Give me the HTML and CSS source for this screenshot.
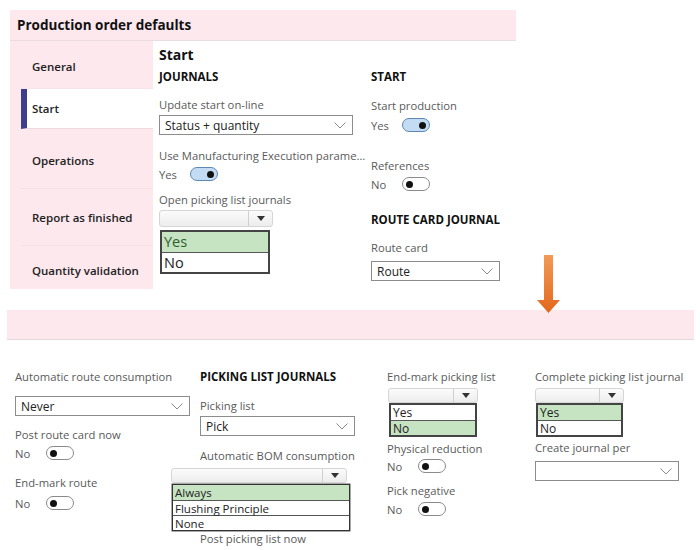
FILE: index.html
```html
<!DOCTYPE html>
<html>
<head>
<meta charset="utf-8">
<link rel="stylesheet" href="styles.css">
</head>
<body>
<div class="top">
  <div class="title-bar">Production order defaults</div>
  <div class="top-main">
    <nav class="nav">
      <div class="tab t-general">General</div>
      <div class="tab t-start">Start</div>
      <div class="tab t-ops">Operations</div>
      <div class="tab t-report">Report as finished</div>
      <div class="tab t-qty">Quantity validation</div>
    </nav>
    <section class="content">
      <h2 class="page-h">Start</h2>
      <div class="cols">
        <div class="col">
          <div class="group">JOURNALS</div>
          <div class="label mt12">Update start on-line</div>
          <div class="select mt2"><span>Status + quantity</span><svg class="chev" viewBox="0 0 12 7"><polyline points="0.5,0.5 6,6 11.5,0.5"/></svg></div>
          <div class="label mt13">Use Manufacturing Execution parame…</div>
          <div class="toggle-row mt2"><span class="tv">Yes</span><span class="switch on"><span class="knob"></span></span></div>
          <div class="label mt10">Open picking list journals</div>
          <div class="combo c-open mt2"><span class="combo-btn"><span class="tri"></span></span></div>
          <div class="list l-open">
            <div class="opt sel">Yes</div>
            <div class="opt">No</div>
          </div>
        </div>
        <div class="col">
          <div class="group">START</div>
          <div class="label mt13">Start production</div>
          <div class="toggle-row mt3"><span class="tv">Yes</span><span class="switch on"><span class="knob"></span></span></div>
          <div class="label mt25">References</div>
          <div class="toggle-row mt2"><span class="tv">No</span><span class="switch"><span class="knob"></span></span></div>
          <div class="group mt20">ROUTE CARD JOURNAL</div>
          <div class="label mt12">Route card</div>
          <div class="select s-route mt5"><span>Route</span><svg class="chev" viewBox="0 0 12 7"><polyline points="0.5,0.5 6,6 11.5,0.5"/></svg></div>
        </div>
      </div>
    </section>
  </div>
</div>

<div class="arrow">
  <svg viewBox="0 0 24 58" width="24" height="58">
    <defs>
      <linearGradient id="og" x1="0" y1="0" x2="0" y2="1">
        <stop offset="0" stop-color="#f29a55"/>
        <stop offset="1" stop-color="#e2681c"/>
      </linearGradient>
    </defs>
    <polygon points="8,0 17,0 17,45 24,45 12.5,58 1,45 8,45" fill="url(#og)"/>
  </svg>
</div>

<div class="band"></div>

<div class="bottom">
  <div class="bcol b1">
    <div class="label">Automatic route consumption</div>
    <div class="select s-never mt11"><span>Never</span><svg class="chev" viewBox="0 0 12 7"><polyline points="0.5,0.5 6,6 11.5,0.5"/></svg></div>
    <div class="label mt11">Post route card now</div>
    <div class="toggle-row mt2"><span class="tv">No</span><span class="switch"><span class="knob"></span></span></div>
    <div class="label mt14">End-mark route</div>
    <div class="toggle-row mt4"><span class="tv">No</span><span class="switch"><span class="knob"></span></span></div>
  </div>
  <div class="bcol b2">
    <div class="group">PICKING LIST JOURNALS</div>
    <div class="label mt13">Picking list</div>
    <div class="select s-pick mt2"><span>Pick</span><svg class="chev" viewBox="0 0 12 7"><polyline points="0.5,0.5 6,6 11.5,0.5"/></svg></div>
    <div class="label mt12">Automatic BOM consumption</div>
    <div class="combo c-bom mt4"><span class="combo-btn"><span class="tri"></span></span></div>
    <div class="list l-bom">
      <div class="opt sel">Always</div>
      <div class="opt">Flushing Principle</div>
      <div class="opt">None</div>
    </div>
    <div class="label">Post picking list now</div>
  </div>
  <div class="bcol b3">
    <div class="label">End-mark picking list</div>
    <div class="combo c-small mt3"><span class="combo-btn"><span class="tri"></span></span></div>
    <div class="list l-small">
      <div class="opt">Yes</div>
      <div class="opt sel">No</div>
    </div>
    <div class="label mt4">Physical reduction</div>
    <div class="toggle-row mt1"><span class="tv">No</span><span class="switch"><span class="knob"></span></span></div>
    <div class="label mt9">Pick negative</div>
    <div class="toggle-row mt2"><span class="tv">No</span><span class="switch"><span class="knob"></span></span></div>
  </div>
  <div class="bcol b4">
    <div class="label">Complete picking list journal</div>
    <div class="combo c-small mt3"><span class="combo-btn"><span class="tri"></span></span></div>
    <div class="list l-small">
      <div class="opt sel">Yes</div>
      <div class="opt">No</div>
    </div>
    <div class="label mt3">Create journal per</div>
    <div class="select s-create mt5"><span></span><svg class="chev" viewBox="0 0 12 7"><polyline points="0.5,0.5 6,6 11.5,0.5"/></svg></div>
  </div>
</div>
</body>
</html>
```

FILE: styles.css
```css
* { box-sizing: border-box; }
html, body { margin: 0; padding: 0; }
body {
  width: 700px;
  height: 550px;
  overflow: hidden;
  position: relative;
  background: #ffffff;
  font-family: "Open Sans", "Noto Sans", sans-serif;
  color: #222;
}

/* ---------- top panel ---------- */
.top { margin: 10px 0 0 10px; width: 506px; }
.title-bar {
  height: 31px;
  background: #fde8ee;
  border-bottom: 1px solid #e9dde1;
  padding-left: 7px;
  font-size: 13.5px;
  font-weight: 700;
  line-height: 30px;
  color: #111;
}
.top-main { display: flex; }
.nav {
  width: 143px;
  height: 248px;
  background: #fde8ee;
  padding-left: 11px;
}
.tab {
  display: flex;
  align-items: center;
  padding-left: 11px;
  font-size: 11.5px;
  font-weight: 600;
  color: #222;
  border-bottom: 1px solid #f6e2e7;
}
.t-general { height: 48px; padding-top: 4px; }
.t-start {
  height: 40px;
  background: #ffffff;
  border-left: 6px solid #3b3f8e;
  padding-left: 5px;
  border-bottom-color: #eedadf;
}
.t-ops { height: 60px; padding-top: 4px; }
.t-report { height: 57px; }
.t-qty { height: 43px; border-bottom: none; padding-top: 6px; }

.content { flex: 1; padding-left: 6px; background: #fff; }
.page-h {
  margin: 4px 0 0 0;
  font-size: 14px;
  font-weight: 700;
  line-height: 20px;
  color: #111;
}
.cols {
  display: grid;
  grid-template-columns: 194px 130px;
  column-gap: 18px;
  margin-top: 4px;
}

/* ---------- shared controls ---------- */
.group {
  font-size: 11.5px;
  font-weight: 700;
  line-height: 16px;
  color: #111;
  white-space: nowrap;
}
.label {
  font-size: 11.25px;
  line-height: 16px;
  color: #5a5a5a;
  white-space: nowrap;
}
.select {
  height: 20px;
  border: 1px solid #8c8c8c;
  background: #fff;
  padding: 0 6px 0 5px;
  display: flex;
  align-items: center;
  justify-content: space-between;
  font-size: 12px;
  color: #222;
}
.chev {
  width: 12px;
  height: 7px;
  fill: none;
  stroke: #8a8a8a;
  stroke-width: 1;
}
.s-route { width: 129px; }
.s-never { width: 175px; }
.s-pick { width: 155px; }
.s-create { width: 144px; }

.toggle-row {
  display: flex;
  align-items: center;
  height: 16px;
  font-size: 11.25px;
  color: #5a5a5a;
}
.tv { width: 31px; }
.switch {
  width: 28px;
  height: 14px;
  border: 1px solid #8a8a8a;
  border-radius: 8px;
  background: #fff;
  display: flex;
  align-items: center;
  padding: 0 3px;
}
.switch .knob {
  width: 7px;
  height: 7px;
  border-radius: 50%;
  background: #111;
}
.switch.on {
  background: #c3dcf3;
  border-color: #5d88b6;
  justify-content: flex-end;
}

.combo {
  height: 17px;
  border: 1px solid #d6d6d6;
  border-radius: 3px;
  background: linear-gradient(#fbfbfb, #ededed);
  display: flex;
  justify-content: flex-end;
}
.combo-btn {
  width: 24px;
  border-left: 1px solid #d0d0d0;
  display: flex;
  align-items: center;
  justify-content: center;
}
.tri {
  width: 0;
  height: 0;
  border-left: 4.5px solid transparent;
  border-right: 4.5px solid transparent;
  border-top: 5px solid #333;
}
.c-open { width: 114px; }

.list {
  border: 2px solid #444;
  background: #fff;
}
.opt {
  border-top: 1px solid #555;
  color: #222;
  padding-left: 2px;
  white-space: nowrap;
}
.opt:first-child { border-top: none; }
.opt.sel { background: #c6e3c2; }

.l-open {
  width: 110px;
  margin: 3px 0 0 1px;
}
.l-open .opt {
  height: 20px;
  line-height: 19px;
  font-size: 14.5px;
}
.l-open .opt.sel { color: #2f5e2f; }

/* ---------- arrow overlay ---------- */
.arrow {
  position: absolute;
  left: 536px;
  top: 255px;
  width: 24px;
  height: 58px;
}
.arrow svg { display: block; }

/* ---------- band ---------- */
.band {
  margin: 21px 0 0 7px;
  width: 687px;
  height: 30px;
  background: #fde8ee;
  border-bottom: 1px solid #e2d8db;
}

/* ---------- bottom panel ---------- */
.bottom {
  display: grid;
  grid-template-columns: 185px 187px 148px 150px;
  margin: 29px 0 0 15px;
}
.c-bom { width: 176px; margin-left: -29px; height: 15px; }
.l-bom {
  width: 178px;
  margin: 1px 0 0 -28px;
  border: 1px solid #333;
  box-shadow: 0 0 0 0.5px #555;
}
.l-bom .opt {
  height: 15px;
  line-height: 15px;
  font-size: 11.5px;
}
.c-small { width: 90px; height: 15px; margin-left: 1px; }
.l-small { width: 88px; margin-left: 2px; }
.l-small .opt {
  height: 15px;
  line-height: 15px;
  font-size: 12px;
}
.b4 .c-small { margin-left: 0; width: 89px; }
.b4 .l-small { margin-left: 1px; width: 87px; }

/* spacing helpers */
.mt1 { margin-top: 1px; }
.mt2 { margin-top: 2px; }
.mt3 { margin-top: 3px; }
.mt4 { margin-top: 4px; }
.mt5 { margin-top: 5px; }
.mt9 { margin-top: 9px; }
.mt10 { margin-top: 10px; }
.mt11 { margin-top: 11px; }
.mt12 { margin-top: 12px; }
.mt13 { margin-top: 13px; }
.mt14 { margin-top: 14px; }
.mt20 { margin-top: 20px; }
.mt25 { margin-top: 25px; }
```
